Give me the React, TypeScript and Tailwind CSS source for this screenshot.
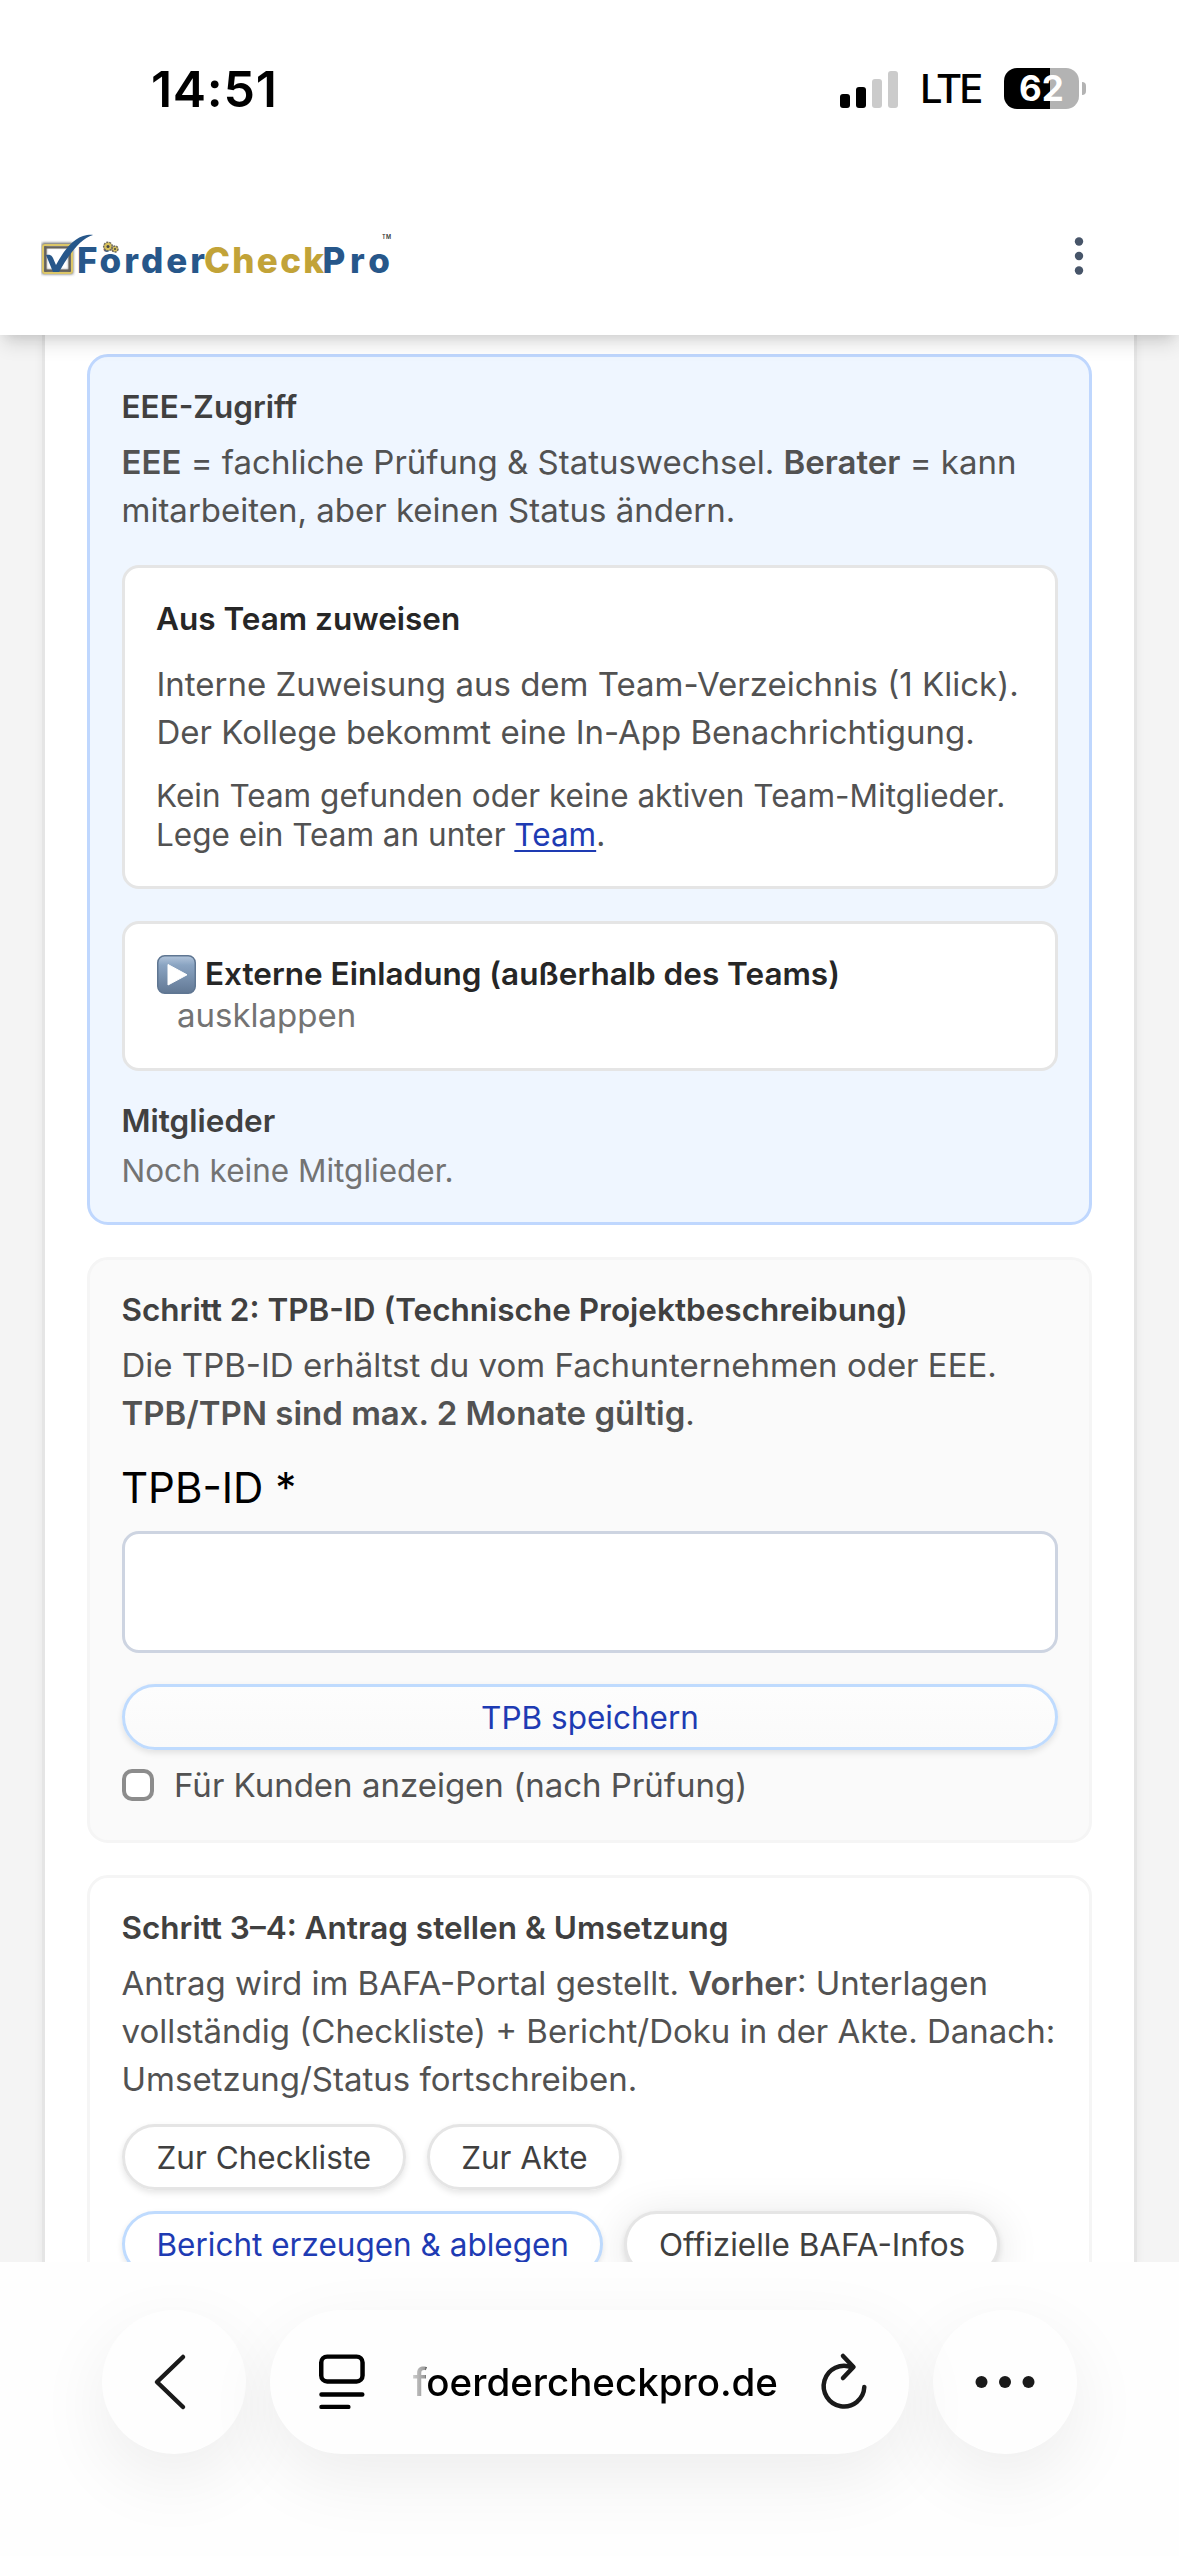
import type { ReactNode } from "react";
import { clsx } from "clsx";

function StatusBar() {
  return (
    <div className="flex h-[175px] items-start justify-between pl-[151px] pr-[93px] text-black">
      <span className="mt-[59px] text-[50px] leading-[60px] font-semibold tracking-[0.7px]">14:51</span>
      <div className="mt-[66px] flex h-[44px] items-center">
        <svg width="60" height="40" viewBox="0 0 60 40">
          <rect x="1" y="26" width="10" height="14" rx="3" fill="#000" />
          <rect x="17" y="19" width="10" height="21" rx="3" fill="#000" />
          <rect x="33" y="11" width="10" height="29" rx="3" fill="#cbcbcb" />
          <rect x="49" y="3" width="10" height="37" rx="3" fill="#cbcbcb" />
        </svg>
        <span className="mt-px ml-[21px] w-[62px] text-[40px] leading-[44px] font-medium tracking-[-2.8px]">LTE</span>
        <div className="relative ml-[22px] flex h-[41px] w-[75px] items-center justify-center overflow-hidden rounded-[13px] bg-[linear-gradient(to_right,#000_62%,#b3b3b3_62%)]">
          <span className="text-[35px] leading-[41px] font-bold text-white">62</span>
        </div>
        <div className="ml-[3px] h-[13px] w-[4px] rounded-r-full bg-[#b3b3b3]" />
      </div>
    </div>
  );
}

function Logo() {
  return (
    <svg width="356" height="50" viewBox="0 0 356 50" className="mt-1 shrink-0">
      <defs>
        <filter id="boxShadow" x="-30%" y="-30%" width="160%" height="160%">
          <feGaussianBlur stdDeviation="1.6" />
        </filter>
      </defs>
      <rect x="3" y="13" width="27" height="27" fill="none" stroke="#555" strokeWidth="4" filter="url(#boxShadow)" />
      <rect x="2" y="13" width="29" height="28" rx="2" fill="none" stroke="#dcc667" strokeWidth="2" />
      <rect x="4.500" y="15.500" width="24" height="23" fill="none" stroke="#66625a" strokeWidth="2" />
      <path d="M5 23c3-1 6 0 7 3l3 7C22 20 32 5 46 3c3-.5 5-.5 6 0C38 7 26 26 18 40h-6z" fill="#27578a" />
      <text x="36" y="40.500" textLength="128" lengthAdjust="spacing" fontSize="35" fontWeight="800" fill="#27578a">Förder</text>
      <text x="163" y="40.500" textLength="120" lengthAdjust="spacing" fontSize="35" fontWeight="800" fill="#c2a338">Check</text>
      <text x="281.500" y="40.500" textLength="67.500" lengthAdjust="spacing" fontSize="35" fontWeight="800" fill="#27578a">Pro</text>
      <circle cx="67" cy="14.500" r="4.300" fill="#d8c15c" stroke="#6d6a60" strokeWidth="1.500" strokeDasharray="2 1" />
      <circle cx="74" cy="17" r="3" fill="#d8c15c" stroke="#6d6a60" strokeWidth="1.500" strokeDasharray="2 1" />
      <circle cx="67" cy="14.500" r="1.500" fill="#444" />
      <circle cx="74" cy="17" r="1" fill="#444" />
      <text x="341" y="6.500" fontSize="5.500" fontWeight="600" textLength="9" fill="#333">TM</text>
    </svg>
  );
}

function Header() {
  return (
    <header className="relative z-10 h-[335px] bg-white shadow-[0_12px_18px_-3px_rgba(0,0,0,0.12),0_6px_12px_-6px_rgba(0,0,0,0.12)]">
      <StatusBar />
      <div className="flex h-[160px] items-center justify-between pl-[41px] pr-[95px]">
        <Logo />
        <svg width="10" height="40" viewBox="0 0 10 40" fill="#475569" className="mt-px">
          <circle cx="5" cy="5.500" r="4.200" />
          <circle cx="5" cy="20" r="4.200" />
          <circle cx="5" cy="34.500" r="4.200" />
        </svg>
      </div>
    </header>
  );
}

function Heading({ children }: { children: ReactNode }) {
  return <h3 className="-ml-[0.5px] text-[31.5px] leading-[48px] font-semibold text-[#404040]">{children}</h3>;
}

function Text({ children, className }: { children: ReactNode; className?: string }) {
  return <p className={clsx("-ml-[0.5px] text-[33px] leading-[48px] text-[#525252]", className)}>{children}</p>;
}

function PillButton({ children, primary, className }: { children: ReactNode; primary?: boolean; className?: string }) {
  return (
    <button
      className={clsx(
        "h-[66px] rounded-full border-[3px] px-[31.5px] text-[31.5px] leading-[59px] shadow-[0_3px_6px_rgba(0,0,0,0.1)]",
        primary ? "border-[#bfdbfe] text-[#1e3bb3]" : "border-[#e5e5e5] text-[#404040]",
        className,
      )}
    >
      {children}
    </button>
  );
}

function PlayEmoji() {
  return (
    <svg width="39" height="39" viewBox="0 0 39 39" className="mr-[9px] inline-block align-[-9px]">
      <defs>
        <linearGradient id="play" x1="0" y1="0" x2="0" y2="1">
          <stop offset="0" stopColor="#b4c6dc" />
          <stop offset="0.250" stopColor="#8aa4c2" />
          <stop offset="1" stopColor="#627894" />
        </linearGradient>
      </defs>
      <rect x="0.750" y="0.750" width="37.500" height="37.500" rx="7" fill="url(#play)" stroke="#5f7692" strokeWidth="1.500" />
      <path d="M11 9.500v20.500L30 19.800z" fill="#fff" stroke="#fff" strokeWidth="1" strokeLinejoin="round" />
    </svg>
  );
}

function AccessCard() {
  return (
    <section className="h-[871px] rounded-[21px] border-[3px] border-[#bfd7fe] bg-[#eff6ff] pt-[26px] pr-[31px] pl-8">
      <Heading>EEE-Zugriff</Heading>
      <Text className="mt-[7px]">
        <b className="font-semibold">EEE</b> = fachliche Prüfung &amp; Statuswechsel. <b className="font-semibold">Berater</b> = kann
        <br />
        mitarbeiten, aber keinen Status ändern.
      </Text>

      <div className="mt-[31px] h-[324px] rounded-[17px] border-[3px] border-[#e5e5e5] bg-white px-8 pt-[31px]">
        <h4 className="-ml-px text-[31.5px] leading-[40px] font-semibold text-[#262626]">Aus Team zuweisen</h4>
        <Text className="mt-[21px]">
          Interne Zuweisung aus dem Team-Verzeichnis (1 Klick).
          <br />
          Der Kollege bekommt eine In-App Benachrichtigung.
        </Text>
        <p className="mt-5 -ml-px text-[31.5px] leading-[39px] text-[#525252]">
          Kein Team gefunden oder keine aktiven Team-Mitglieder.
          <br />
          Lege ein Team an unter{" "}
          <a className="text-[#1e3bb3] underline decoration-2 underline-offset-[4px]">Team</a>.
        </p>
      </div>

      <div className="mt-8 h-[150px] rounded-[17px] border-[3px] border-[#e5e5e5] bg-white px-8 pt-[29px]">
        <div className="h-[41px] text-[31.5px] leading-[42px] font-semibold text-[#262626]">
          <PlayEmoji />
          Externe Einladung (außerhalb des Teams)
        </div>
        <div className="pl-[20px] text-[33px] leading-[42px] text-[#737373]">ausklappen</div>
      </div>

      <div className="mt-[26px]">
        <Heading>Mitglieder</Heading>
      </div>
      <p className="mt-[2px] -ml-[0.5px] text-[31.5px] leading-[48px] text-[#737373]">Noch keine Mitglieder.</p>
    </section>
  );
}

function TpbCard() {
  return (
    <section className="mt-8 h-[586px] rounded-[21px] border-[3px] border-[#f5f5f5] bg-[#fafafa] pt-[26px] pr-[31px] pl-8">
      <Heading>Schritt 2: TPB-ID (Technische Projektbeschreibung)</Heading>
      <Text className="mt-[7px]">
        Die TPB-ID erhältst du vom Fachunternehmen oder EEE.
        <br />
        <b className="font-semibold">TPB/TPN sind max. 2 Monate gültig</b>.
      </Text>
      <label className="mt-[21px] -ml-px block text-[42px] leading-[60px] text-black">TPB-ID *</label>
      <input className="mt-[13px] block h-[122px] w-full rounded-[17px] border-[3px] border-[#cdd4e1] bg-white" />
      <PillButton primary className="mt-[31px] block w-full bg-linear-to-b from-[#fdfdfd] to-[#fafafa]">
        TPB speichern
      </PillButton>
      <label className="mt-[11px] flex items-center">
        <span className="size-[32px] rounded-[10px] border-4 border-[#8c8c8c] bg-white" />
        <span className="ml-[20px] text-[33px] leading-[48px] text-[#525252]">Für Kunden anzeigen (nach Prüfung)</span>
      </label>
    </section>
  );
}

function ApplicationCard() {
  return (
    <section className="mt-8 h-[600px] rounded-[21px] border-[3px] border-[#f5f5f5] bg-white pt-[26px] pr-[31px] pl-8">
      <Heading>Schritt 3–4: Antrag stellen &amp; Umsetzung</Heading>
      <Text className="mt-[7px]">
        Antrag wird im BAFA-Portal gestellt. <b className="font-semibold">Vorher</b>: Unterlagen
        <br />
        vollständig (Checkliste) + Bericht/Doku in der Akte. Danach:
        <br />
        Umsetzung/Status fortschreiben.
      </Text>
      <div className="mt-[21px] flex flex-wrap gap-[21px]">
        <PillButton>Zur Checkliste</PillButton>
        <PillButton>Zur Akte</PillButton>
        <PillButton primary>Bericht erzeugen &amp; ablegen</PillButton>
        <PillButton className="bg-white shadow-[0_6px_45px_rgba(0,0,0,0.11),0_3px_6px_rgba(0,0,0,0.1)]">Offizielle BAFA-Infos</PillButton>
      </div>
    </section>
  );
}

function BrowserBar() {
  const shadow = "bg-[#fefefe] shadow-[0_24px_72px_rgba(0,0,0,0.07)]";
  return (
    <footer className="flex h-[294px] items-start justify-center gap-6 overflow-hidden bg-[#fefefe] pt-[48px]">
      <div className={clsx("flex size-[144px] items-center justify-center rounded-full", shadow)}>
        <svg width="36" height="60" viewBox="0 0 36 60" className="mr-[9px]" fill="none" stroke="#1a1a1a" strokeWidth="4.500" strokeLinecap="round" strokeLinejoin="round">
          <path d="M31 5L5 30l26 25" />
        </svg>
      </div>
      <div className={clsx("relative flex h-[144px] w-[639px] items-center rounded-full pl-[49px] pr-[40px]", shadow)}>
        <svg width="46" height="56" viewBox="0 0 46 56" fill="none" stroke="#000" strokeWidth="4.500" strokeLinecap="round">
          <rect x="2.250" y="2.500" width="41.500" height="25" rx="6" />
          <path d="M2.500 40.500h41M2.500 53h27" />
        </svg>
        <span className="ml-[48px] w-[367px] bg-[linear-gradient(to_right,#ccc_0px,#999_12px,#000_14px)] bg-clip-text text-[38.5px] leading-[50px] font-medium whitespace-nowrap text-transparent">
          foerdercheckpro.de
        </span>
        <svg width="50" height="60" viewBox="0 0 50 60" className="ml-[41px] shrink-0" fill="none" stroke="#1a1a1a" strokeWidth="4.500" strokeLinecap="round" strokeLinejoin="round">
          <path d="M33 15.500A20.300 20.300 0 1 0 45.300 35" />
          <path d="M24 4l10.500 11L24 26" />
        </svg>
      </div>
      <div className={clsx("flex size-[144px] items-center justify-center rounded-full", shadow)}>
        <svg width="60" height="14" viewBox="0 0 60 14" fill="#1a1a1a">
          <circle cx="6.500" cy="7" r="6" />
          <circle cx="30" cy="7" r="6" />
          <circle cx="53.500" cy="7" r="6" />
        </svg>
      </div>
    </footer>
  );
}

export default function App() {
  return (
    <div className="h-[2556px] w-[1179px] overflow-hidden bg-white font-['Inter',sans-serif]">
      <Header />
      <main className="h-[1927px] overflow-hidden bg-[#f4f4f4] px-[42px]">
        <div className="h-full border-x-[3px] border-[#e5e5e5] bg-white px-[42px] pt-[19px] whitespace-nowrap shadow-[0_3px_9px_rgba(0,0,0,0.06)]">
          <AccessCard />
          <TpbCard />
          <ApplicationCard />
        </div>
      </main>
      <BrowserBar />
    </div>
  );
}
